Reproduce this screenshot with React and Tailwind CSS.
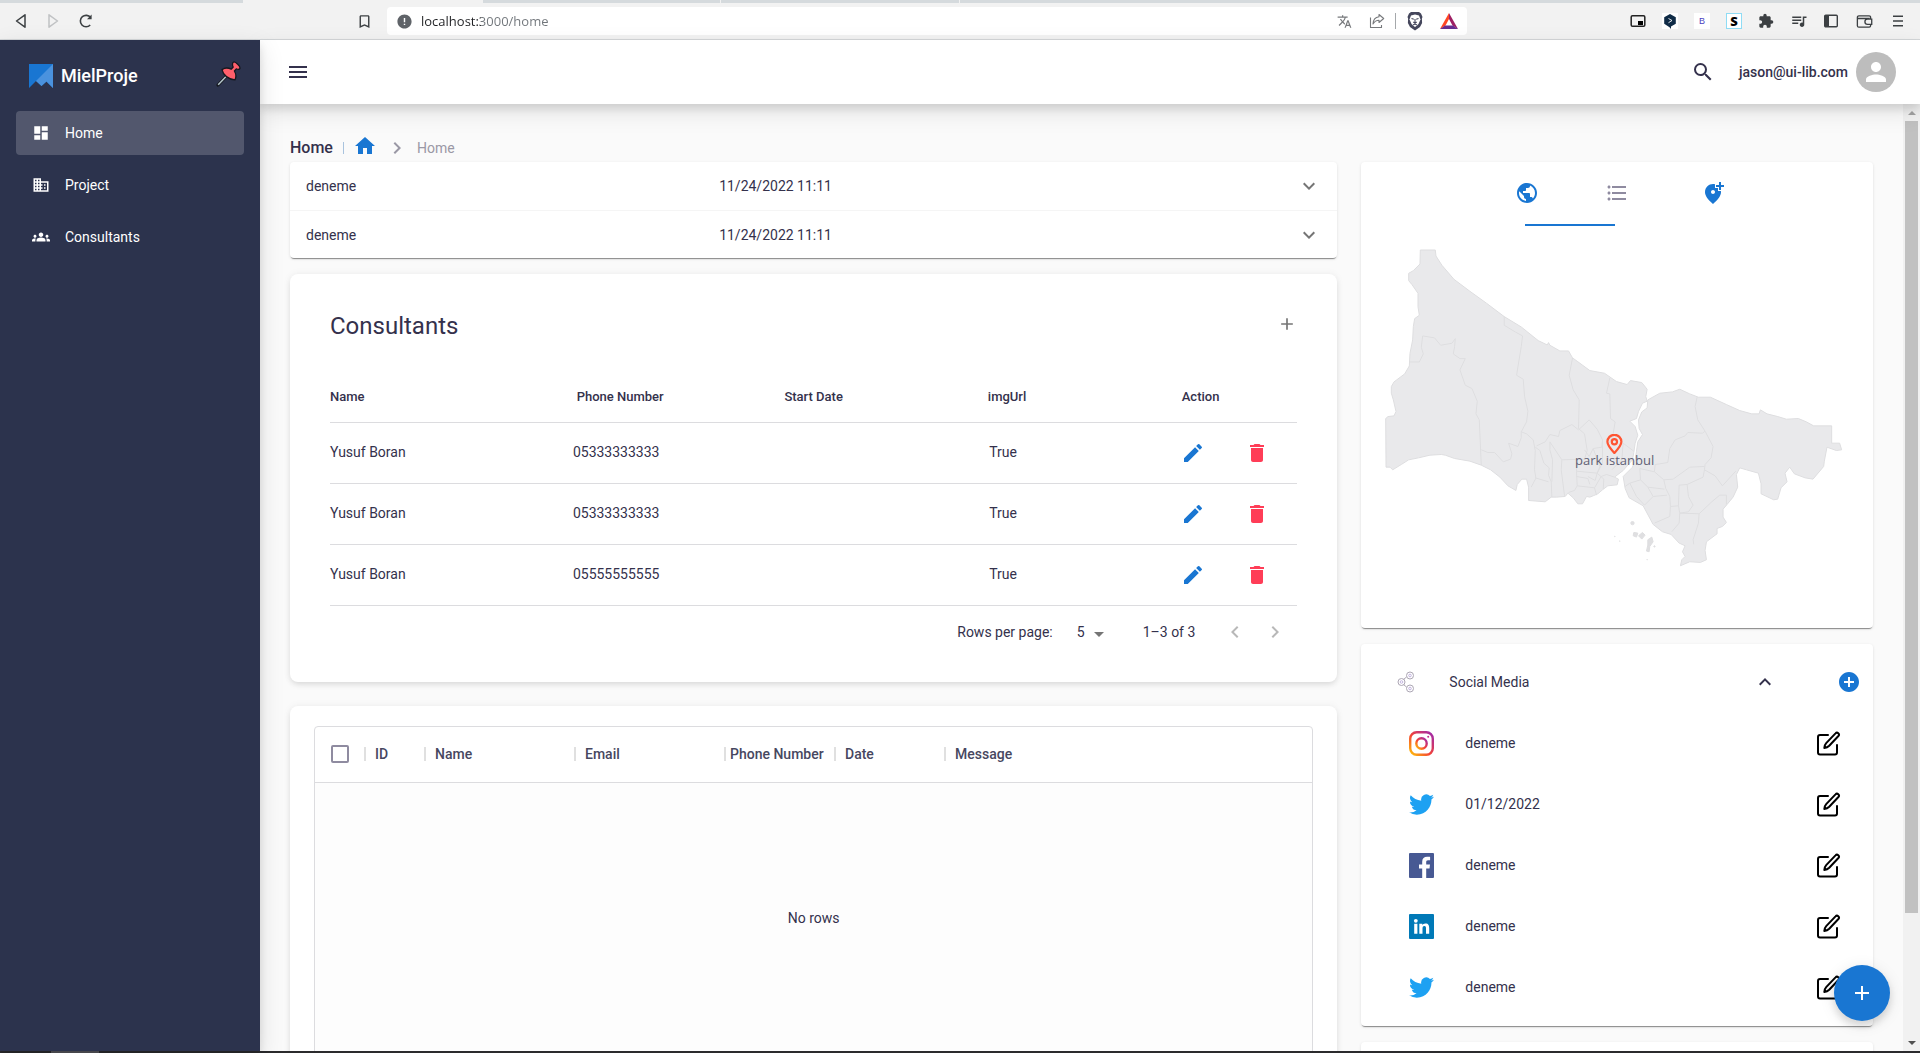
import React from "react";
import {
  MdDashboard, MdBusiness, MdGroups, MdMenu, MdSearch, MdPerson, MdHome, MdNavigateNext,
  MdExpandMore, MdExpandLess, MdAdd, MdEdit, MdDelete, MdArrowDropDown, MdChevronLeft,
  MdChevronRight, MdPublic, MdFormatListBulleted, MdAddLocationAlt, MdAddCircle, MdExtension,
  MdQueueMusic, MdTranslate, MdError, MdBookmarkBorder,
} from "react-icons/md";

const CARD = "rounded-sm bg-white shadow-[0_2px_1px_-1px_rgba(0,0,0,0.4),0_1px_3px_0_rgba(0,0,0,0.12)]";
const SOFT_CARD = "rounded-lg bg-white shadow-[0_3px_6px_-1px_rgba(0,0,0,0.12),0_0_8px_0_rgba(0,0,0,0.05)]";

function BrowserBar() {
  return (
    <div className="flex h-10 shrink-0 flex-col border-b border-[#d5d8da] bg-[#f2f2f2] text-[#3c4043]">
      <div className="flex h-[3px] shrink-0">
        <div className="w-[243px] bg-[#d5dadd]" />
        <div className="w-60" />
        <div className="w-[237px] bg-[#d5dadd]" />
        <div className="ml-px w-[238px] bg-[#d5dadd]" />
        <div className="ml-px flex-1 bg-[#d5dadd]" />
      </div>
      <div className="flex flex-1 items-center">
        <div className="flex w-[387px] items-center justify-between px-[14px]">
          <div className="flex items-center gap-4">
            <button aria-label="Back">
              <svg width="14" height="16" viewBox="0 0 14 16" fill="none" stroke="#3c4043" strokeWidth="1.5" strokeLinejoin="round"><path d="M11 1.8v12.4L2.5 8z" /></svg>
            </button>
            <button aria-label="Forward" className="ml-0.5">
              <svg width="14" height="16" viewBox="0 0 14 16" fill="none" stroke="#c0c2c4" strokeWidth="1.5" strokeLinejoin="round"><path d="M3 1.8v12.4L11.5 8z" /></svg>
            </button>
            <button aria-label="Reload" className="ml-0.5">
              <svg width="16" height="16" viewBox="0 0 16 16" fill="none" stroke="#3c4043" strokeWidth="1.6"><path d="M12.2 12a5.7 5.7 0 1 1 .4-7.4" /><path d="M13.6 1.6v4.6H9z" fill="#3c4043" stroke="none" /></svg>
            </button>
          </div>
          <button aria-label="Bookmark"><MdBookmarkBorder size={17} /></button>
        </div>
        <div className="flex h-7 w-[1080px] items-center justify-between rounded bg-white pr-[9px] pl-[9px]">
          <div className="flex flex-1 items-center gap-2">
            <MdError size={17} className="text-[#5f6368]" />
            <input
              aria-label="Address"
              defaultValue="localhost:3000/home"
              className="h-6 flex-1 bg-[linear-gradient(to_right,#202124_60px,#70757a_60px)] bg-clip-text font-['Open_Sans',sans-serif] text-[13px] text-transparent outline-none"
            />
          </div>
          <div className="flex items-center text-[#77797c]">
            <button aria-label="Translate"><MdTranslate size={15} /></button>
            <button aria-label="Share" className="ml-[17px]">
              <svg width="16" height="16" viewBox="0 0 16 16" fill="none" stroke="#77797c" strokeWidth="1.1" strokeLinejoin="round"><path d="M1.5 4.5v10h11v-2.500" /><path d="M10 1.500l4.700 4L10 9.500V7.300C7.500 7.300 5.500 8.500 4 11c.2-4 2.500-6.700 6-7.200z" /></svg>
            </button>
            <div className="ml-2.5 h-4 w-px bg-[#a5a8ab]" />
            <button aria-label="Shields" className="ml-2.5">
              <svg width="18" height="20" viewBox="0 0 18 20"><path d="M5 1h8l2 1.500 1.500 3.500-.6 1.500.2 4.500L14 16l-5 3.500L4 16l-2.100-4 .2-4.500L1.500 6 3 2.500z" fill="#45475c" /><path d="M5 4.500l4-1 4 1 1.500 4-2 4.500-1.500 1.500-2 1.500-2-1.500L5.500 13l-2-4.500z" fill="#fff" /><path d="M5.500 7.500l2.300.8M12.500 7.500l-2.300.8M9 8v3.500M7.300 11l1.700 1.200 1.700-1.200M7 14l2-1 2 1" stroke="#45475c" strokeWidth="1.100" fill="none" /></svg>
            </button>
            <button aria-label="Rewards" className="ml-4">
              <svg width="18" height="16" viewBox="0 0 18 16"><path d="M9 0L0 16l5.500-3.500L9 6z" fill="#ff4724" /><path d="M9 0l9 16-5.500-3.500L9 6z" fill="#9e1f63" /><path d="M0 16h18l-5-3.500H5z" fill="#662d91" /></svg>
            </button>
          </div>
        </div>
        <div className="flex flex-1 items-center justify-end gap-4 pr-[15px]">
          <button aria-label="Picture in picture">
            <svg width="16" height="16" viewBox="0 0 16 16"><rect x="1.200" y="2.700" width="13.600" height="10.600" rx="1.300" fill="none" stroke="#222" strokeWidth="1.500" /><path d="M8 8h5v4H8z" fill="#000" /></svg>
          </button>
          <button aria-label="Deep translate" className="bg-white">
            <svg width="16" height="16" viewBox="0 0 16 16"><path d="M8 1l5.800 3.200v6.600L9 13.500V16l-1.500-1.800-5.300-3.400V4.200z" fill="#0f2b46" /><path d="M6.500 5.500l3.500 2-3.500 2.200" stroke="#fff" strokeWidth=".9" fill="none" /></svg>
          </button>
          <button className="flex size-4 items-center justify-center bg-white font-['Liberation_Sans',sans-serif] text-[9px] text-[#4a3fc0]">B</button>
          <button className="flex size-4 items-center justify-center border border-[#8fdcf5] bg-white font-['Open_Sans',sans-serif] text-[13px] leading-none font-extrabold text-black">S</button>
          <button aria-label="Extensions"><MdExtension size={16} /></button>
          <button aria-label="Playlist"><MdQueueMusic size={18} /></button>
          <button aria-label="Sidebar">
            <svg width="14" height="14" viewBox="1 1 14 14"><rect x="1.700" y="2.200" width="12.600" height="11.600" rx="1" fill="none" stroke="#3c4043" strokeWidth="1.400" /><path d="M2 2h4v12H2z" fill="#3c4043" /></svg>
          </button>
          <button aria-label="Wallet" className="ml-0.5">
            <svg width="17" height="15" viewBox="0 0 18 16" fill="none" stroke="#3c4043" strokeWidth="1.400"><path d="M15.500 5V3.500A1.500 1.500 0 0 0 14 2H3a1.600 1.600 0 0 0-1.600 1.600v8.800A1.600 1.600 0 0 0 3 14h11a1.600 1.600 0 0 0 1.500-1.500V11.500M2 4.800h12.500M16.700 5.500v5.500h-4.500a2.700 2.700 0 0 1 0-5.500z" /></svg>
          </button>
          <button aria-label="Menu" className="ml-0.5">
            <svg width="14" height="14" viewBox="0 0 14 14" stroke="#3c4043" strokeWidth="1.600"><path d="M2 2.200h10M2 7h10M2 11.800h10" /></svg>
          </button>
        </div>
      </div>
    </div>
  );
}

const NAV = [
  { label: "Home", Icon: MdDashboard, active: true },
  { label: "Project", Icon: MdBusiness },
  { label: "Consultants", Icon: MdGroups },
];

function Sidebar() {
  return (
    <aside className="z-20 w-65 shrink-0 bg-[#2c334d] px-4 text-white shadow-[0_5px_8px_rgba(0,0,0,0.1),0_8px_24px_rgba(0,0,0,0.12)]">
      <div className="flex h-[71px] items-center pr-0.5 pl-[13px]">
        <svg width="24" height="24" viewBox="0 0 24 24"><path d="M0 0h24v24l-6.500-6.500L12.500 22 7 17 0 24z" fill="#1976d2" /><path d="M24 0v24l-6.500-6.500L12.500 22 7 17z" fill="#4a92de" /></svg>
        <span className="ml-2 flex-1 text-lg font-medium">MielProje</span>
        <button aria-label="Pin sidebar" className="mb-1">
          <svg width="26" height="26" viewBox="0 0 26 26" strokeLinejoin="round"><path d="M11 14.500L2 24" stroke="#15181f" strokeWidth="3.200" strokeLinecap="round" /><path d="M11.500 14L2.200 23.800" stroke="#b4c6cc" strokeWidth="1.500" /><path d="M17.300 1.200c1-.8 2.700.4 4.400 2.100s2.900 3.500 2 4.500-2.500.5-3.400 0l-1.900 2.200c1.800 3 1.900 6.200.6 8.900C12.500 18.500 7 14 6 8.600c2.700-1.900 6.300-1.900 9.200-.4l2-2.200c-.9-1.300-1-4 .1-4.800z" fill="#ff5f6b" stroke="#15181f" strokeWidth="1.300" /></svg>
        </button>
      </div>
      <nav className="flex flex-col gap-2">
        {NAV.map(({ label, Icon, active }) => (
          <a key={label} href="#" className={active ? "flex h-11 items-center rounded bg-white/18 px-4" : "flex h-11 items-center rounded px-4"}>
            <Icon size={18} />
            <span className="ml-[15px] text-sm">{label}</span>
          </a>
        ))}
      </nav>
    </aside>
  );
}

function TopBar() {
  return (
    <header className="z-10 flex h-16 shrink-0 items-center justify-between bg-white pr-6 pl-[26px] shadow-[0_5px_8px_rgba(0,0,0,0.1),0_8px_24px_rgba(0,0,0,0.1)]">
      <button aria-label="Toggle menu"><MdMenu size={24} /></button>
      <div className="flex items-center">
        <button aria-label="Search"><MdSearch size={24} /></button>
        <button className="ml-6 flex items-center gap-2">
          <span className="text-sm font-medium">jason@ui-lib.com</span>
          <span className="flex size-10 items-center justify-center rounded-full bg-[#bdbdbd] text-white"><MdPerson size={30} /></span>
        </button>
      </div>
    </header>
  );
}

function Accordion() {
  return (
    <section className={CARD}>
      {[0, 1].map((i) => (
        <button key={i} className={i ? "grid h-12 w-full grid-cols-[minmax(0,413fr)_minmax(0,578fr)_24px] items-center border-t border-[#f5f5f5] px-4 text-left" : "grid h-12 w-full grid-cols-[minmax(0,413fr)_minmax(0,578fr)_24px] items-center px-4 text-left"}>
          <span>deneme</span>
          <span>11/24/2022 11:11</span>
          <MdExpandMore size={24} className="text-[#757575]" />
        </button>
      ))}
    </section>
  );
}

const CONSULTANTS = [
  ["Yusuf Boran", "05333333333"],
  ["Yusuf Boran", "05333333333"],
  ["Yusuf Boran", "05555555555"],
];

function Consultants() {
  return (
    <section className={`${SOFT_CARD} mt-4 px-10 pt-8 pb-6`}>
      <div className="flex h-10 items-center justify-between">
        <h2 className="text-2xl">Consultants</h2>
        <button aria-label="Add consultant" className="pb-1 text-[#757575]"><MdAdd size={20} /></button>
      </div>
      <table className="mt-7 w-full table-fixed border-collapse">
        <thead>
          <tr className="h-12 border-b border-[#dcdcdf] text-[13px]">
            <th className="text-left font-medium">Name</th>
            <th className="font-medium">Phone Number</th>
            <th className="font-medium">Start Date</th>
            <th className="font-medium">imgUrl</th>
            <th className="font-medium">Action</th>
          </tr>
        </thead>
        <tbody>
          {CONSULTANTS.map(([name, phone], i) => (
            <tr key={i} className="h-[61px] border-b border-[#dcdcdf]">
              <td className="pb-0.5">{name}</td>
              <td className="pr-2 pb-0.5 text-center">{phone}</td>
              <td />
              <td className="pr-2 pb-0.5 text-center">True</td>
              <td className="pr-2">
                <div className="flex justify-end">
                  <button aria-label="Edit" className="flex w-16 justify-center text-[#1976d2]"><MdEdit size={24} /></button>
                  <button aria-label="Delete" className="flex w-16 justify-center text-[#ff3d57]"><MdDelete size={24} /></button>
                </div>
              </td>
            </tr>
          ))}
        </tbody>
      </table>
      <div className="flex h-13 items-center justify-end pr-[10px]">
        <label htmlFor="rows">Rows per page:</label>
        <div className="relative ml-6">
          <select id="rows" className="w-[34px] appearance-none bg-transparent outline-none" defaultValue="5"><option>5</option></select>
          <MdArrowDropDown size={24} className="pointer-events-none absolute top-0 right-0 text-[#757575]" />
        </div>
        <span className="ml-8">1–3 of 3</span>
        <button aria-label="Previous page" className="ml-7 text-[#b8b8b8]"><MdChevronLeft size={24} /></button>
        <button aria-label="Next page" className="ml-4 text-[#b8b8b8]"><MdChevronRight size={24} /></button>
      </div>
    </section>
  );
}

const COLUMNS = [
  ["ID", "w-15 shrink-0"],
  ["Name", "w-[150px] shrink-0"],
  ["Email", "w-[150px] shrink-0"],
  ["Phone Number", "w-[110px] shrink-0"],
  ["Date", "w-[110px] shrink-0"],
  ["Message", "flex-1"],
];

function Messages() {
  return (
    <section className={`${SOFT_CARD} mt-6 px-6 py-5`}>
      <div className="rounded border border-[#dcdcdf]">
        <div className="flex h-14 items-center border-b border-[#dcdcdf] font-medium text-[#47475f]">
          <div className="flex w-[49px] shrink-0 justify-center">
            <input type="checkbox" aria-label="Select all rows" className="size-[18px] appearance-none rounded-[2px] border-2 border-[#8f8ba0]" />
          </div>
          {COLUMNS.map(([label, width]) => (
            <div key={label} className={`${width} flex items-center`}>
              <span className="h-3.5 w-0.5 bg-[#e0e0e0]" />
              <span className={label === "Phone Number" ? "pl-1 whitespace-nowrap" : "pl-[9px]"}>{label}</span>
            </div>
          ))}
        </div>
        <div className="flex h-[270px] items-center justify-center bg-[#fdfdfd]">No rows</div>
        <div className="h-13 border-t border-[#dcdcdf]" />
      </div>
    </section>
  );
}

const EUROPE =
  "M181 60H226L228 78 246 106 282 148 330 184 380 220 433 260 484 291 535 332 562 345 566 338 570 346 600 363H626L638 384 652 394 690 422 734 430 770 455 802 464 812 452 846 458 862 478 858 500 862 514 848 520 836 545 830 566 810 574 826 590 834 616 826 640 822 668 818 690 790 722 764 742 776 748 772 765 744 768 728 780 714 792 700 798 690 802 680 800 668 822H654L640 804 624 790 616 800 590 802 574 802 556 816 506 812V772L500 748H486L472 764 468 782 444 768 420 742 392 720 364 706 330 694 284 686 256 676 244 674 210 676 176 684 146 690 124 704 98 720 90 712H78L77 566 84 560 102 558 108 545 100 510 94 490V470L102 456 134 432 148 408 150 370 158 330 160 290 164 266 178 256 174 230V190L156 164 146 152V130L160 122 180 102Z";
const ASIA =
  "M864 510L900 490 938 486 960 478 990 492 1016 502 1052 502 1100 524 1140 542 1176 552 1198 552 1202 540 1222 552 1254 560 1280 568 1316 566 1340 576 1362 588H1416V640L1440 640 1446 660 1430 662 1402 652 1394 694 1392 710 1360 748 1336 744 1304 732 1290 712 1276 730 1282 756 1264 774 1254 808 1242 810 1204 792V762L1196 730 1160 720 1140 714 1130 734 1134 772 1120 802 1102 824 1090 838 1090 862 1100 878 1088 890 1072 896V912L1040 936 1036 962 1040 990 1022 998 990 996 962 1008 966 990 976 980 968 966 976 948 958 940 934 914 908 906 880 884 850 828 808 804 796 776 790 740 818 712 826 690 830 664 834 636 848 614 838 596 836 570 846 546 862 534Z";
const DISTRICTS = [
  "M150 396H178L190 372 184 352 188 318 224 324 242 346 276 340 286 326 284 350 280 372 300 386H316L300 420 316 466 336 476 352 514 348 552 358 570 364 706",
  "M433 260V286L466 306 488 318 484 350 470 436 490 448 494 500 504 544 500 576 484 606 500 612 520 630 526 662 524 720 528 745 514 772",
  "M638 384L628 436 640 480 658 510 656 596 674 612 682 662 674 688 606 690M656 600L636 584 600 602 596 620 570 614 556 636 530 648M750 444L740 490 750 492 752 566 766 576 760 612 748 640",
  "M364 660L384 668H404L430 696 452 688 456 672 446 640 474 650 484 624 484 606M526 652L540 662 552 700 568 714 566 736 574 756 576 802M526 744L566 756M570 636L606 690 604 720 614 798M570 636V660L578 690 576 756",
  "M656 600L688 570 712 598 728 630 726 652 700 656 688 680 674 660M700 656L720 710 712 730 650 724 652 688M650 724L652 768 704 774 724 740 740 734 764 742M652 768L644 782 626 788M704 774L710 796M728 630L728 700 712 730 732 748 730 778M790 640L786 690 756 720M790 640L822 664M684 740L706 752 712 730M650 740L684 746 690 764",
  "M1012 502L1006 530 1014 570 1036 604 1028 610 984 608 976 618 946 630 930 656 924 698 900 702 886 704 884 726 840 716M1036 604L1060 650 1054 684 1036 704 1034 720 1066 738 1088 768 1128 724M884 726L912 750 940 748 990 712 1034 710",
  "M912 750L918 776 930 800 932 830 956 828 958 766 982 764 1030 742 1034 720M982 764L986 800 1000 826 986 846 960 850 956 828M960 850L958 880 936 906M932 830L930 860 884 880M840 716L842 750 864 772 914 778M842 750L810 760 796 770M864 772L880 800 922 796M880 800L854 826 830 800 810 760M960 850L1018 852 1016 880 1000 930 1002 944M1018 852L1056 816 1080 796H1100V824",
];

function CityMap() {
  return (
    <div className="relative px-6">
      <svg viewBox="75 54 1392 966" className="w-full" fill="#e9e9eb" stroke="#dedee0" strokeWidth="3" strokeLinejoin="round">
        <path d={EUROPE} />
        <path d={ASIA} />
        <g fill="none">{DISTRICTS.map((d) => <path key={d} d={d} />)}</g>
        <g fill="#dfdfe1">
          <circle cx="818" cy="880" r="5" />
          <path d="M822 908l12 2-4 12-10-4zM836 918l12-10 8 8-10 12zM864 930l12-8 4 14-10 14-2 16-8-2 4-18z" />
          <circle cx="884" cy="950" r="2" /><circle cx="765" cy="920" r="1" /><circle cx="780" cy="934" r="1" /><circle cx="862" cy="990" r="1" />
        </g>
      </svg>
      <div className="absolute top-[186px] left-[49.5%] flex -translate-x-1/2 flex-col items-center">
        <svg width="24" height="20" viewBox="0 2 24 20" fill="none" stroke="#ff5533" strokeWidth="2.200"><path d="M12 21c4-4.300 7-7.500 7-11.200a7 7 0 0 0-14 0c0 3.700 3 6.900 7 11.200z" /><circle cx="12" cy="9.800" r="2.600" /></svg>
        <span className="font-['Open_Sans',sans-serif] text-[13px] leading-3 whitespace-nowrap text-[#5f5f74]">park istanbul</span>
      </div>
    </div>
  );
}

function MapCard() {
  return (
    <section className={`${CARD} pb-[58px]`}>
      <div className="flex h-[62px] justify-center" role="tablist">
        <button role="tab" aria-label="Globe" className="flex w-[90px] items-center justify-center text-[#1976d2]"><MdPublic size={24} /></button>
        <button role="tab" aria-label="List" className="flex w-[90px] items-center justify-center text-[#8f8ba0]"><MdFormatListBulleted size={24} /></button>
        <button role="tab" aria-label="Add place" className="flex w-[90px] items-center justify-center pl-3 text-[#1976d2]"><MdAddLocationAlt size={24} /></button>
      </div>
      <div className="mb-[22px] flex justify-center pr-[94px]"><div className="h-0.5 w-[90px] bg-[#1976d2]" /></div>
      <CityMap />
    </section>
  );
}

function Instagram() {
  return (
    <svg width="25" height="25" viewBox="0 0 25 25" fill="none">
      <defs><linearGradient id="ig" x1="0" y1="1" x2="1" y2="0"><stop offset="0" stopColor="#ffc107" /><stop offset=".45" stopColor="#f44336" /><stop offset="1" stopColor="#9c27b0" /></linearGradient></defs>
      <rect x="1.200" y="1.200" width="22.600" height="22.600" rx="6.500" stroke="url(#ig)" strokeWidth="2.400" /><circle cx="12.500" cy="12.500" r="5.200" stroke="url(#ig)" strokeWidth="2.400" /><circle cx="19.200" cy="5.800" r="1" fill="#c2308f" />
    </svg>
  );
}
function Twitter() {
  return <svg width="25" height="25" viewBox="0 0 24 24" fill="#1da1f2"><path d="M23.950 4.570a10 10 0 0 1-2.820.770 4.960 4.960 0 0 0 2.160-2.720c-.950.550-2 .950-3.130 1.180a4.920 4.920 0 0 0-8.380 4.480C7.690 8.090 4.070 6.130 1.640 3.160a4.920 4.920 0 0 0 1.520 6.570 4.900 4.900 0 0 1-2.230-.610v.060a4.920 4.920 0 0 0 3.950 4.830 5 5 0 0 1-2.210.080 4.940 4.940 0 0 0 4.600 3.420A9.870 9.870 0 0 1 0 19.540a14 14 0 0 0 7.550 2.210c9.050 0 14-7.500 14-13.980 0-.210 0-.420-.020-.630a9.940 9.940 0 0 0 2.460-2.550z" /></svg>;
}
function Facebook() {
  return <svg width="25" height="25" viewBox="0 0 25 25"><rect width="25" height="25" rx="1" fill="#475993" /><path d="M17.200 25v-9.600h3.300l.5-3.800h-3.800V9.200c0-1.100.3-1.900 1.900-1.900h2V3.900c-.4 0-1.600-.1-3-.1-2.900 0-4.900 1.800-4.900 5v2.800H10v3.800h3.200V25z" fill="#fff" /></svg>;
}
function LinkedIn() {
  return <svg width="25" height="25" viewBox="0 0 25 25"><rect width="25" height="25" rx="1" fill="#0079b7" /><g fill="#fff"><circle cx="6.800" cy="6.800" r="1.900" /><path d="M5.200 9.700h3.200v10H5.200zM10.300 9.700h3v1.400c.5-.9 1.600-1.700 3.100-1.700 3.200 0 3.800 2.100 3.800 4.800v5.500H17v-4.900c0-1.200 0-2.700-1.600-2.700s-1.900 1.300-1.900 2.600v5h-3.200z" /></g></svg>;
}

function EditIcon() {
  return (
    <svg width="25" height="25" viewBox="0 0 25 25" fill="none" stroke="currentColor" strokeWidth="2" strokeLinecap="round" strokeLinejoin="round">
      <path d="M12 4H4a2 2 0 0 0-2 2v15.500a2 2 0 0 0 2 2h15a2 2 0 0 0 2-2V14" />
      <path d="M19.500 2.400a1.900 1.900 0 0 1 2.900 2.600L13.200 14.800c-1.200 1.200-2.800 2-4.900 2.200.1-2 .8-3.700 1.900-4.900z" />
    </svg>
  );
}

const SOCIAL = [
  ["deneme", Instagram],
  ["01/12/2022", Twitter],
  ["deneme", Facebook],
  ["deneme", LinkedIn],
  ["deneme", Twitter],
];

function SocialCard() {
  return (
    <section className={`${CARD} mt-4 pt-2 pb-2`}>
      <div className="flex h-[61px] items-center pr-3 pl-9">
        <svg width="18" height="24" viewBox="0 0 18 24" fill="none" stroke="#aca6b4" strokeWidth="1"><circle cx="4.500" cy="12" r="3.500" /><circle cx="13" cy="5.500" r="3.500" /><circle cx="13" cy="18.500" r="3.500" /><path d="M6.500 9.500l3-2.500M6.500 14.500l3 2.500" /><g stroke="#c3b4e0"><circle cx="4.500" cy="12" r="1.300" /><circle cx="13" cy="5.500" r="1.300" /><circle cx="13" cy="18.500" r="1.300" /></g></svg>
        <span className="ml-[34px] flex-1">Social Media</span>
        <button aria-label="Collapse"><MdExpandLess size={24} /></button>
        <button aria-label="Add social account" className="ml-15 text-[#1976d2]"><MdAddCircle size={24} /></button>
      </div>
      <ul>
        {SOCIAL.map(([label, Icon], i) => (
          <li key={i} className="flex h-[61px] items-center pr-8 pl-12">
            <Icon />
            <span className="ml-[31px] flex-1">{label}</span>
            <button aria-label="Edit" className="text-black"><EditIcon /></button>
          </li>
        ))}
      </ul>
    </section>
  );
}

function ScrollBar() {
  return (
    <div className="flex w-[17px] shrink-0 flex-col items-center bg-[#f1f1f1]">
      <div className="flex h-[17px] items-center"><div className="border-x-4 border-b-4 border-x-transparent border-b-[#a3a3a3]" /></div>
      <div className="w-[13px] flex-[792] bg-[#c1c1c1]" />
      <div className="flex-[121]" />
      <div className="flex h-[17px] items-center"><div className="border-x-4 border-t-4 border-x-transparent border-t-[#505050]" /></div>
    </div>
  );
}

export default function App() {
  return (
    <div className="flex h-screen flex-col overflow-hidden bg-[#fafafa] font-[Roboto,sans-serif] text-sm text-[#34314c]">
      <BrowserBar />
      <div className="flex min-h-0 flex-1">
        <Sidebar />
        <div className="flex min-w-0 flex-1 flex-col">
          <TopBar />
          <div className="flex min-h-0 flex-1">
            <main className="min-w-0 flex-1 overflow-hidden px-[30px] pt-[30px]">
              <nav aria-label="Breadcrumb" className="flex h-7 items-center">
                <h1 className="text-base font-medium">Home</h1>
                <span className="ml-[10px] h-3 w-px bg-[#a9c3de]" />
                <a href="#" aria-label="Home" className="ml-[9px] pb-1 text-[#1976d2]"><MdHome size={24} /></a>
                <MdNavigateNext size={24} className="ml-2 text-[#9a98a5]" />
                <span className="ml-2 text-[#9a98a5]">Home</span>
              </nav>
              <div className="grid grid-cols-3 items-start gap-6">
                <div className="col-span-2">
                  <Accordion />
                  <Consultants />
                  <Messages />
                </div>
                <div>
                  <MapCard />
                  <SocialCard />
                  <section className={`${CARD} mt-4 h-20`} />
                </div>
              </div>
            </main>
            <ScrollBar />
          </div>
        </div>
      </div>
      <div className="flex h-0.5 shrink-0 bg-[#2b2b2d]"><div className="ml-[51px] w-12 bg-[#55555b]" /></div>
      <button aria-label="Add" className="fixed right-[30px] bottom-8 z-30 flex size-14 items-center justify-center rounded-full bg-[#1976d2] text-white shadow-[0_5px_8px_rgba(0,0,0,0.12),0_3px_16px_rgba(0,0,0,0.1)]"><MdAdd size={24} /></button>
    </div>
  );
}
